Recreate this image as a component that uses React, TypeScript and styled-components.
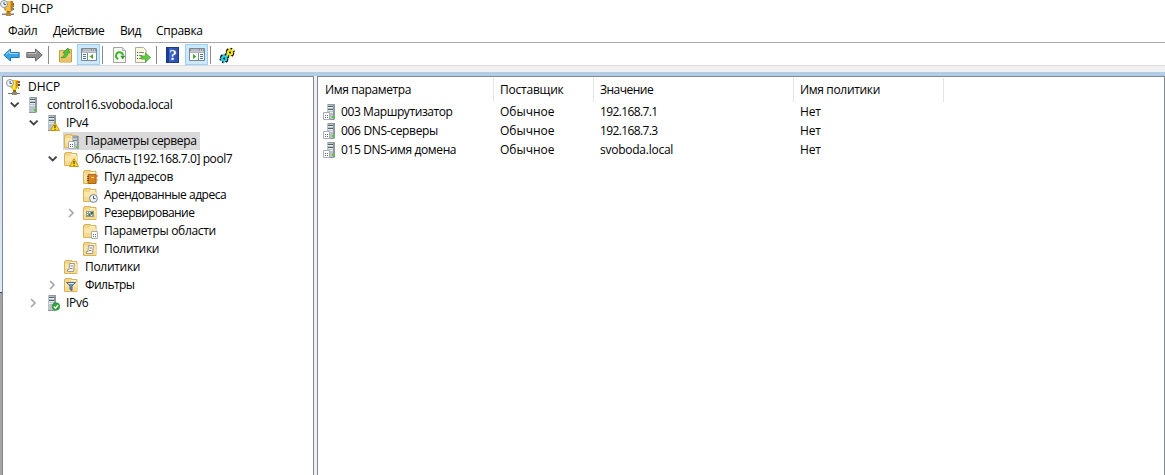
import React from "react";
import styled, { createGlobalStyle } from "styled-components";

const GlobalStyle = createGlobalStyle`
  * { box-sizing: border-box; }
  html, body { margin: 0; padding: 0; height: 100%; overflow: hidden; background: #fff; }
  body { font-family: "Open Sans", "Noto Sans", sans-serif; font-size: 12px; color: #000; }
  svg { display: block; flex: none; }
`;

const Window = styled.div`
  width: 1165px;
  height: 475px;
  display: flex;
  flex-direction: column;
  background: #fff;
  overflow: hidden;
`;

const Label = styled.span<{ $ls?: number }>`
  white-space: pre;
  line-height: 18px;
  letter-spacing: ${(p) => p.$ls ?? 0}px;
`;

const TitleBar = styled.header`
  height: 19px;
  display: flex;
  align-items: flex-start;
  gap: 5px;
`;

const MenuBar = styled.nav`
  height: 23px;
  display: flex;
  align-items: center;
  padding: 1px 0 0 8px;
`;

const MenuItem = styled.div<{ $w: number }>`
  width: ${(p) => p.$w}px;
  height: 18px;
`;

const ToolBar = styled.div`
  height: 24px;
  display: flex;
  align-items: flex-end;
  border-top: 1px solid #a9a9a9;
  border-bottom: 1px solid #d9d9d9;
`;

const Tool = styled.div<{ $w: number; $on?: boolean }>`
  width: ${(p) => p.$w}px;
  height: 21px;
  padding-top: 1px;
  display: flex;
  align-items: center;
  justify-content: center;
  background: ${(p) => (p.$on ? "#cce8ff" : "transparent")};
  border: ${(p) => (p.$on ? "1px solid #99d1ff" : "0")};
`;

const Separator = styled.div<{ $l: number; $r: number }>`
  width: 1px;
  height: 18px;
  margin: 0 ${(p) => p.$r}px 1px ${(p) => p.$l}px;
  background: #8c8c8c;
`;

const Gutter = styled.div`
  height: 6px;
  background: #f0f0f0;
`;

const Frame = styled.div`
  height: 4px;
  background: #b4cde6;
`;

const Body = styled.main`
  flex: 1;
  display: flex;
  min-height: 0;
`;

const Edge = styled.div`
  width: 2px;
  background: linear-gradient(#c9dcef 0, #dce9f7 216px, #3f434c 216px, #3f434c 217px, #a5a5a5 217px);
`;

const TreePane = styled.section`
  width: 312px;
  border: 1px solid #828790;
  border-bottom: 0;
  padding-top: 1px;
`;

const Splitter = styled.div`
  width: 3px;
  background: #f0f0f0;
`;

const ListPane = styled.section`
  flex: 1;
  border: 1px solid #828790;
  border-bottom: 0;
  padding-top: 1px;
`;

const TreeRow = styled.div<{ $level: number }>`
  height: 18px;
  display: flex;
  align-items: center;
  padding-left: ${(p) => (p.$level === 0 ? 3 : p.$level * 19 - 16)}px;
`;

const Toggle = styled.div`
  width: 19px;
  height: 18px;
  display: flex;
  align-items: center;
  padding-left: 4px;
`;

const TreeNode = styled.div<{ $selected?: boolean }>`
  height: 18px;
  display: flex;
  align-items: center;
  gap: 6px;
  padding-right: 4px;
  background: ${(p) => (p.$selected ? "#d9d9d9" : "transparent")};
`;

const ListHeader = styled.div`
  height: 24px;
  display: flex;
`;

const HeaderCell = styled.div<{ $w: number }>`
  width: ${(p) => p.$w}px;
  height: 24px;
  padding: 3px 0 0 6px;
  border-right: 1px solid #e5e5e5;

  &:first-child { padding-left: 7px; }
`;

const ListRow = styled.div`
  height: 19px;
  display: flex;
  align-items: center;
`;

const Cell = styled.div<{ $w: number }>`
  width: ${(p) => p.$w}px;
  display: flex;
  align-items: center;
  gap: 4px;
  padding-left: 6px;
`;

const NameCell = styled(Cell)`
  padding-left: 5px;
  gap: 5px;
`;

const Svg = ({ w = 16, h = 16, children }: { w?: number; h?: number; children: React.ReactNode }) => (
  <svg width={w} height={h} viewBox={`0 0 ${w} ${h}`}>{children}</svg>
);

const Clock = () => (
  <g>
    <circle cx="4" cy="4" r="3.500" fill="#eef4f8" stroke="#8b969f" />
    <path d="M4 2v2.500h2" fill="none" stroke="#54616b" />
  </g>
);

const DhcpIcon = () => (
  <Svg>
    <path d="M13 3h1v2h-1z" fill="#e23b1c" />
    <path d="M13 5h1v2h-1z" fill="#39a832" />
    <path d="M13 8h1v2h-1z" fill="#2b79c9" />
    <path d="M4 1h9v9l-2 2H7l-3-2z" fill="#e5a02a" />
    <path d="M6 1h4v10H6z" fill="#f5bd48" />
    <path d="M11 1h2v9l-2 1z" fill="#b87a20" />
    <path d="M7 11h3v2H7z" fill="#8d6b2d" />
    <path d="M2 13.500h12v1.500H2z" fill="#7b8187" />
    <path d="M6 12.500h5V16H6z" fill="#b98a35" />
    <Clock />
  </Svg>
);

const DhcpRootIcon = () => (
  <Svg>
    <path d="M12 2h2v2h-2z" fill="#d9341c" />
    <path d="M12 5h2v2h-2z" fill="#444" />
    <path d="M12 8h1v2h-1z" fill="#c98a1d" />
    <path d="M5 1h7v7l-2 3H7L4 8z" fill="#f3c416" />
    <path d="M7 2h2v8H7z" fill="#ffe95a" />
    <path d="M10 2h2v5l-2 3z" fill="#c79206" />
    <path d="M7 11h3v2H7z" fill="#8a6c12" />
    <path d="M2 14h12v1H2z" fill="#6f767c" />
    <path d="M6 13h5v3H6z" fill="#8e8a72" />
    <Clock />
  </Svg>
);

const Tower = ({ x = 0 }: { x?: number }) => (
  <g transform={`translate(${x} 0)`}>
    <path d="M0 1l1-1h7v15l-1 1H0z" fill="#8e999f" />
    <path d="M0 1h6v14H0z" fill="#b9c3c8" />
    <path d="M1 2.500h5M1 5.500h5" stroke="#4f626b" />
    <path d="M1 3.500h5M1 6.500h5M1 8.500h5" stroke="#e6ecef" />
    <path d="M5 12h2v2H5z" fill="#43d81c" />
  </g>
);

const ServerIcon = () => <Svg><Tower x={4} /></Svg>;

const Warning = () => (
  <g>
    <path d="M11 7.500l4.500 8h-9z" fill="#ffd928" stroke="#b78b00" strokeWidth=".8" strokeLinejoin="round" />
    <path d="M10.500 10h1v3h-1zM10.500 13.800h1v1h-1z" fill="#222" />
  </g>
);

const ServerWarnIcon = () => <Svg><Tower x={4} /><Warning /></Svg>;

const ServerOkIcon = () => (
  <Svg>
    <Tower x={4} />
    <circle cx="12" cy="11.500" r="3.800" fill="#2fa83a" stroke="#1c8128" strokeWidth=".6" />
    <path d="M9.800 11.500l1.700 1.700 2.700-3.200" fill="none" stroke="#fff" strokeWidth="1.300" />
  </Svg>
);

const Folder = () => (
  <g>
    <path d="M1.500 14.500v-12h1v-1h6v1h5.500v12z" fill="#f3d688" stroke="#d9b35c" />
    <path d="M8 3h5v1.500H8z" fill="#fff6d8" />
    <path d="M2 5h12v9H2z" fill="#fbe6a8" />
    <path d="M2 10h12v4H2z" fill="#f6da8f" />
  </g>
);

const Sheet = ({ x, y }: { x: number; y: number }) => (
  <g transform={`translate(${x} ${y})`}>
    <path d="M.5.5h6v7h-6z" fill="#fff" stroke="#a9aeb5" />
    <path d="M2 3h1v1H2zM4 3h1v1H4zM2 5h1v1H2zM4 5h1v1H4z" fill="#566884" />
  </g>
);

const FolderServerIcon = () => (
  <Svg>
    <Folder />
    <g transform="translate(9 3) scale(.85)"><Tower /></g>
    <Sheet x={5} y={8} />
  </Svg>
);
const FolderWarnIcon = () => <Svg><Folder /><Warning /></Svg>;
const FolderBookIcon = () => (
  <Svg>
    <Folder />
    <path d="M6 5.500h8v9H6z" fill="#d68420" stroke="#a05a10" strokeWidth=".8" />
    <path d="M5 7.500h2M5 9.500h2M5 11.500h2" stroke="#6b4310" strokeWidth=".8" />
    <path d="M14.500 6h1v2h-1z" fill="#e2401f" />
    <path d="M14.500 10h1v2h-1z" fill="#e8891c" />
    <path d="M9 8h3v1H9z" fill="#ffd58a" />
  </Svg>
);
const FolderClockIcon = () => (
  <Svg>
    <Folder />
    <circle cx="11.500" cy="11.500" r="3.900" fill="#f4f8fb" stroke="#72808c" />
    <path d="M11.500 9v2.700h2" fill="none" stroke="#445462" />
  </Svg>
);
const FolderGridIcon = () => (
  <Svg>
    <Folder />
    <path d="M4 6h8v6H4z" fill="#8f9b91" />
    <path d="M5 7h1v1H5zM7 7h1v1H7zM5 9h1v1H5zM9 10h1v1H9z" fill="#fff" />
    <path d="M9 7h2v2H9zM7 9h1v2H7z" fill="#2f7b3f" />
  </Svg>
);
const FolderSheetIcon = () => <Svg><Folder /><Sheet x={9} y={8} /></Svg>;
const FolderPolicyIcon = () => (
  <Svg>
    <Folder />
    <path d="M6.500 4.500h5l-1 8h-6v-2h1.500z" fill="#f3f3f1" stroke="#96938b" strokeWidth=".9" />
    <path d="M7.500 7h2.500M7 9.500h2.500" stroke="#77736b" strokeWidth=".8" />
  </Svg>
);
const FolderFilterIcon = () => (
  <Svg>
    <Folder />
    <path d="M3.500 5.500h9L9 9v4.500l-2-1V9z" fill="#6f97b8" stroke="#3f5d78" strokeWidth=".9" />
    <path d="M5 6.500h6" stroke="#d8e9f5" />
  </Svg>
);

const OptionIcon = () => (
  <Svg w={13}>
    <Tower x={4} />
    <Sheet x={0} y={8} />
  </Svg>
);

const Open = () => (
  <Svg w={10} h={6}><path d="M.8.600l3.900 3.900L8.600.600" fill="none" stroke="#404040" strokeWidth="1.800" /></Svg>
);
const Closed = () => (
  <Svg w={8} h={10}><path d="M2 1l4 4-4 4" fill="none" stroke="#a6a6a6" strokeWidth="1.600" /></Svg>
);

const BackIcon = () => (
  <Svg w={17}>
    <path d="M.8 8l6.700-6v3.500h8.700v5H7.500V14z" fill="#3ba5e6" stroke="#2478b5" />
    <path d="M3 7.500l3.700-3.300v2.300h8.500" fill="none" stroke="#a0dcfa" />
  </Svg>
);
const ForwardIcon = () => (
  <Svg w={17}>
    <path d="M16.200 8L9.500 2v3.500H.8v5h8.700V14z" fill="#8f8f8f" stroke="#686868" />
    <path d="M1.500 6.500h8.700V4.200" fill="none" stroke="#bdbdbd" />
  </Svg>
);
const UpIcon = () => (
  <Svg>
    <path d="M1.500 15V3.500h6l1-1h5V15z" fill="#f0cf78" stroke="#c79d45" />
    <path d="M2 10h11v4.500H2z" fill="#e9c365" />
    <path d="M3 10.500c2.500-.5 3.500-2.500 3.500-4.500H4.800L10 1l2 5h-2c-.5 3.500-3 5.500-7 4.500z" fill="#54c437" stroke="#35962a" strokeWidth=".7" />
  </Svg>
);
const PaneIcon = ({ flip }: { flip?: boolean }) => (
  <Svg>
    <path d="M.5 1.500h15v12H.5z" fill="#fff" stroke="#7e8790" />
    <path d="M1 2h14v2.500H1z" fill="#8c959e" />
    <path d="M2 3h8" stroke="#dfe4e8" />
    <path d="M11 2.500h1v1h-1zM13 2.500h1v1h-1z" fill="#fff" />
    <path d="M1 5.500h14" stroke="#aeb5bc" />
    <g transform={flip ? "matrix(-1 0 0 1 16 0)" : undefined}>
      <path d="M6.500 6v7.500" stroke="#7e8790" />
      <path d="M2 7.500h3M2 9.500h3M2 11.500h3" stroke="#4179bd" />
      <path d="M12 7v5L8.500 9.500z" fill="#3faf2b" />
    </g>
  </Svg>
);
const RefreshIcon = () => (
  <Svg>
    <path d="M1.500.5h9l3 3v12h-12z" fill="#fafaf4" stroke="#a3a3a3" />
    <path d="M10.500.5v3h3" fill="#e4e4e4" stroke="#b5b5b5" />
    <path d="M6.200 12A3.500 3.500 0 1 1 11 8.500" fill="none" stroke="#3fb52c" strokeWidth="2" />
    <path d="M8.200 8.800h5L10.700 12.500z" fill="#2f9f22" />
  </Svg>
);
const ExportIcon = () => (
  <Svg w={17}>
    <path d="M1.500.5h8l2.500 2.500v12.500H1.500z" fill="#fdf7dc" stroke="#ababa0" />
    <path d="M3 5.500h1M3 8.500h1M3 11.500h1" stroke="#444" />
    <path d="M5 5.500h5M5 8.500h3M5 11.500h3" stroke="#7c8a9e" />
    <path d="M7 9h4.500V6l5 4.500-5 4.500v-3H7z" fill="#63cb45" stroke="#3b9e2b" strokeWidth=".7" />
  </Svg>
);
const HelpGlyph = styled.div`
  width: 13px;
  height: 16px;
  margin-right: 2px;
  background: linear-gradient(90deg, #1d3f92 0 2px, #3e68c9 2px, #2a50b0);
  border: 1px solid #1f3b86;
  color: #fff;
  font: bold 15px/14px "Liberation Serif", serif;
  text-align: center;
  padding-left: 1px;
`;
const gear = (cx: number, cy: number, fill: string) => (
  <g transform={`translate(${cx} ${cy})`}>
    <path d="M-4.500 1.500L4.500-1.500M-3 -3.500L3 3.500M-1.500 4.500L1.500-4.500M-4-1.500L4 1.500" stroke="#000" strokeWidth="2" />
    <circle r="3.300" fill={fill} stroke="#000" strokeWidth=".6" strokeDasharray="1 2" />
    <path d="M-4 1h2.500v1.500H-4zM1.500-3H4v1.500H1.500zM-1-4.500h1.500v2H-1zM-1 3h1.500v1.500H-1z" fill={fill} />
    <circle r="1" fill="#000" />
  </g>
);
const GearsIcon = () => (
  <Svg w={17} h={17}>
    {gear(11, 5.5, "#f5e61b")}
    {gear(5.2, 11.5, "#27d3df")}
  </Svg>
);

type Item = { level: number; text: string; icon: React.ReactNode; open?: boolean; closed?: boolean; selected?: boolean; ls?: number };

const tree: Item[] = [
  { level: 0, text: "DHCP", icon: <DhcpRootIcon /> },
  { level: 1, text: "control16.svoboda.local", icon: <ServerIcon />, open: true, ls: -0.33 },
  { level: 2, text: "IPv4", icon: <ServerWarnIcon />, open: true, ls: -0.25 },
  { level: 3, text: "Параметры сервера", icon: <FolderServerIcon />, selected: true, ls: -0.37 },
  { level: 3, text: "Область [192.168.7.0] pool7", icon: <FolderWarnIcon />, open: true, ls: -0.42 },
  { level: 4, text: "Пул адресов", icon: <FolderBookIcon />, ls: -0.29 },
  { level: 4, text: "Арендованные адреса", icon: <FolderClockIcon />, ls: -0.48 },
  { level: 4, text: "Резервирование", icon: <FolderGridIcon />, closed: true, ls: -0.58 },
  { level: 4, text: "Параметры области", icon: <FolderSheetIcon />, ls: -0.31 },
  { level: 4, text: "Политики", icon: <FolderPolicyIcon />, ls: -0.3 },
  { level: 3, text: "Политики", icon: <FolderPolicyIcon />, ls: -0.3 },
  { level: 3, text: "Фильтры", icon: <FolderFilterIcon />, closed: true, ls: -0.55 },
  { level: 2, text: "IPv6", icon: <ServerOkIcon />, closed: true, ls: -0.25 },
];

type Text = [string, number];
const columns: { w: number; text: Text }[] = [
  { w: 176, text: ["Имя параметра", -0.38] },
  { w: 100, text: ["Поставщик", -0.22] },
  { w: 200, text: ["Значение", -0.5] },
  { w: 150, text: ["Имя политики", -0.33] },
];
const rows: Text[][] = [
  [["003 Маршрутизатор", -0.41], ["Обычное", 0], ["192.168.7.1", -0.62], ["Нет", -0.2]],
  [["006 DNS-серверы", -0.33], ["Обычное", 0], ["192.168.7.3", -0.62], ["Нет", -0.2]],
  [["015 DNS-имя домена", -0.38], ["Обычное", 0], ["svoboda.local", -0.25], ["Нет", -0.2]],
];
const menu: { w: number; text: Text }[] = [
  { w: 45, text: ["Файл", -0.4] },
  { w: 67, text: ["Действие", -0.5] },
  { w: 36, text: ["Вид", -0.5] },
  { w: 60, text: ["Справка", -0.3] },
];

export default function App() {
  return (
    <Window>
      <GlobalStyle />
      <TitleBar><DhcpIcon /><Label>DHCP</Label></TitleBar>
      <MenuBar>
        {menu.map((m) => (
          <MenuItem key={m.text[0]} $w={m.w}><Label $ls={m.text[1]}>{m.text[0]}</Label></MenuItem>
        ))}
      </MenuBar>
      <ToolBar>
        <Tool $w={23}><BackIcon /></Tool>
        <Tool $w={23}><ForwardIcon /></Tool>
        <Separator $l={2} $r={5} />
        <Tool $w={23}><UpIcon /></Tool>
        <Tool $w={23} $on><PaneIcon /></Tool>
        <Separator $l={2} $r={5} />
        <Tool $w={23}><RefreshIcon /></Tool>
        <Tool $w={23}><ExportIcon /></Tool>
        <Separator $l={2} $r={5} />
        <Tool $w={23}><HelpGlyph>?</HelpGlyph></Tool>
        <Tool $w={23} $on><PaneIcon flip /></Tool>
        <Separator $l={2} $r={5} />
        <Tool $w={23}><GearsIcon /></Tool>
      </ToolBar>
      <Gutter />
      <Frame />
      <Body>
        <Edge />
        <TreePane>
          {tree.map((t, i) => (
            <TreeRow key={i} $level={t.level}>
              {t.level > 0 && <Toggle>{t.open ? <Open /> : t.closed ? <Closed /> : null}</Toggle>}
              <TreeNode $selected={t.selected}>{t.icon}<Label $ls={t.ls}>{t.text}</Label></TreeNode>
            </TreeRow>
          ))}
        </TreePane>
        <Splitter />
        <ListPane>
          <ListHeader>
            {columns.map((c) => (
              <HeaderCell key={c.text[0]} $w={c.w}><Label $ls={c.text[1]}>{c.text[0]}</Label></HeaderCell>
            ))}
          </ListHeader>
          {rows.map((r, i) => (
            <ListRow key={i}>
              <NameCell $w={columns[0].w}><OptionIcon /><Label $ls={r[0][1]}>{r[0][0]}</Label></NameCell>
              {r.slice(1).map((c, j) => (
                <Cell key={j} $w={columns[j + 1].w}><Label $ls={c[1]}>{c[0]}</Label></Cell>
              ))}
            </ListRow>
          ))}
        </ListPane>
      </Body>
    </Window>
  );
}
